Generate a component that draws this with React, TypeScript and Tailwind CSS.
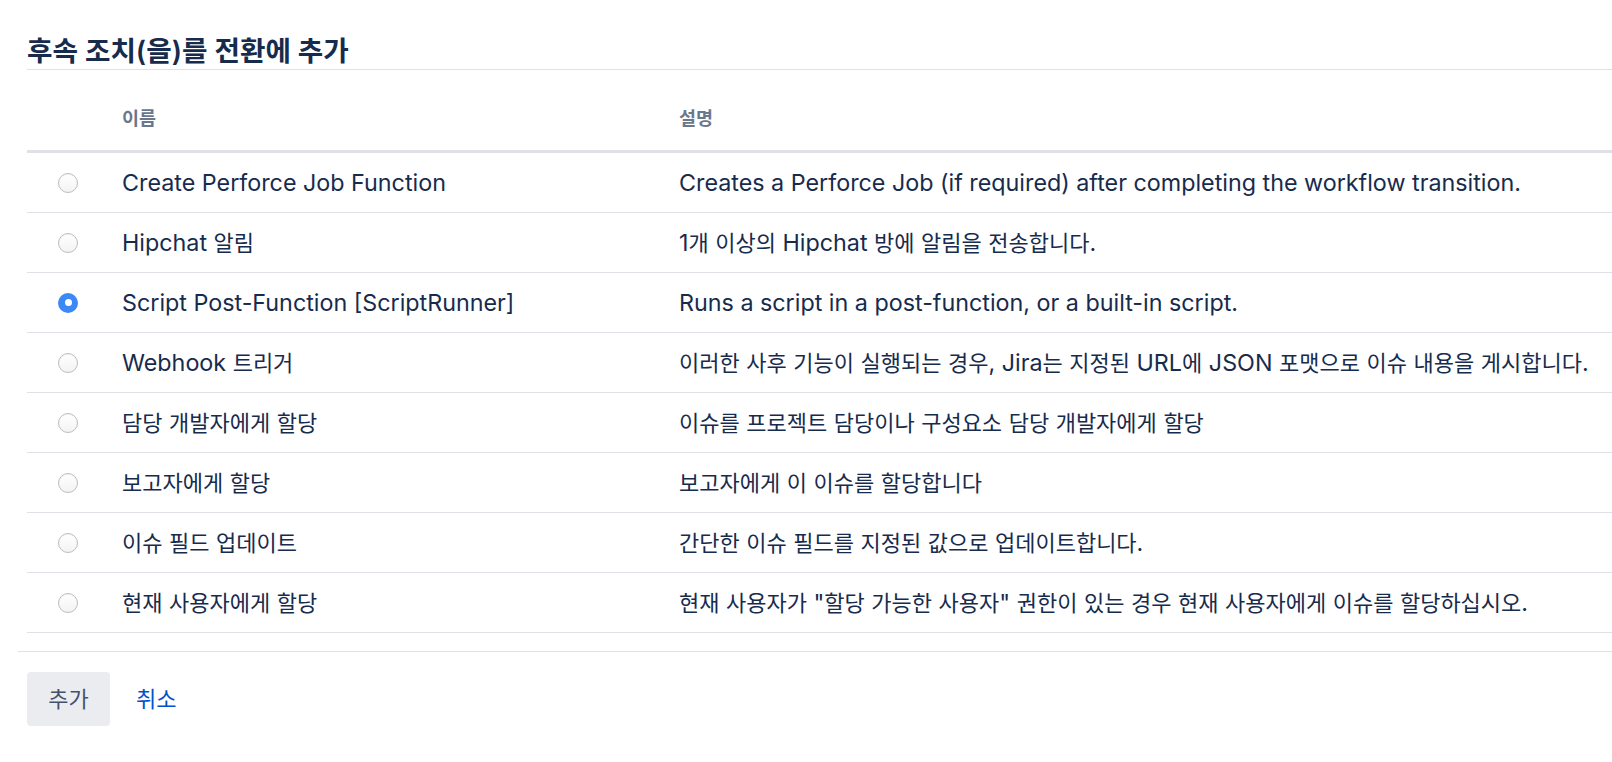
import React from 'react';

const rows = [
  {
    name: 'Create Perforce Job Function',
    desc: 'Creates a Perforce Job (if required) after completing the workflow transition.',
  },
  { name: 'Hipchat 알림', desc: '1개 이상의 Hipchat 방에 알림을 전송합니다.' },
  {
    name: 'Script Post-Function [ScriptRunner]',
    desc: 'Runs a script in a post-function, or a built-in script.',
    checked: true,
  },
  {
    name: 'Webhook 트리거',
    desc: '이러한 사후 기능이 실행되는 경우, Jira는 지정된 URL에 JSON 포맷으로 이슈 내용을 게시합니다.',
  },
  { name: '담당 개발자에게 할당', desc: '이슈를 프로젝트 담당이나 구성요소 담당 개발자에게 할당' },
  { name: '보고자에게 할당', desc: '보고자에게 이 이슈를 할당합니다' },
  { name: '이슈 필드 업데이트', desc: '간단한 이슈 필드를 지정된 값으로 업데이트합니다.' },
  {
    name: '현재 사용자에게 할당',
    desc: '현재 사용자가 "할당 가능한 사용자" 권한이 있는 경우 현재 사용자에게 이슈를 할당하십시오.',
  },
];

// hangul glyphs run a bit narrower than latin in the original font
function Mixed({ text }: { text: string }) {
  const parts = text.split(/([\u3131-\u318e\uac00-\ud7a3]+)/);
  return (
    <>
      {parts.map((p, i) =>
        /[\u3131-\u318e\uac00-\ud7a3]/.test(p) ? (
          <span key={i} className="text-[0.944em]">
            {p}
          </span>
        ) : (
          <React.Fragment key={i}>{p}</React.Fragment>
        )
      )}
    </>
  );
}

function Radio({ checked }: { checked?: boolean }) {
  if (checked) {
    return (
      <span className="w-[20px] h-[20px] rounded-full bg-[#3b88f6] flex items-center justify-center">
        <span className="w-[7px] h-[7px] rounded-full bg-white" />
      </span>
    );
  }
  return (
    <span className="w-[20px] h-[20px] rounded-full border border-[#bdbdbd] bg-gradient-to-b from-white to-[#f3f3f3] shadow-[inset_0_1px_1px_rgba(0,0,0,0.04)]" />
  );
}

export default function App() {
  return (
    <div
      className="min-h-screen bg-white pl-[18px] text-[#172b4d]"
      style={{ fontFamily: 'Inter, "Noto Sans CJK KR", sans-serif' }}
    >
      <div className="pl-[9px]">
        {/* Title */}
        <h2 className="pt-[35px] pb-[2px] leading-[32px] text-[27.7px] font-semibold border-b border-[#dfe1e6]">
          후속 조치(을)를 전환에 추가
        </h2>

        {/* Table header */}
        <div className="grid grid-cols-[95px_557px_1fr] h-[83px] items-end pb-[20px] border-b-[3px] border-[#dfe1e6] text-[18.5px] font-bold text-[#6b778c]">
          <div />
          <div className="leading-[24px]">이름</div>
          <div className="leading-[24px]">설명</div>
        </div>

        {/* Rows */}
        {rows.map((row) => (
          <div
            key={row.name}
            className="grid grid-cols-[95px_557px_1fr] h-[60px] items-center border-b border-[#dfe1e6] text-[23.3px]"
          >
            <div className="pl-[31px] flex items-center">
              <Radio checked={row.checked} />
            </div>
            <div className="whitespace-nowrap leading-[28px]">
              <Mixed text={row.name} />
            </div>
            <div className="whitespace-nowrap leading-[28px]">
              <Mixed text={row.desc} />
            </div>
          </div>
        ))}
      </div>

      {/* Footer */}
      <div className="mt-[18px] border-t border-[#dfe1e6] pl-[9px] pt-[20px] flex items-center gap-[26px]">
        <button className="w-[83px] h-[54px] rounded-[4px] bg-[#ebecf0] text-[22px] text-[#42526e]">
          추가
        </button>
        <a className="text-[22px] text-[#0052cc]" href="#">
          취소
        </a>
      </div>
    </div>
  );
}
